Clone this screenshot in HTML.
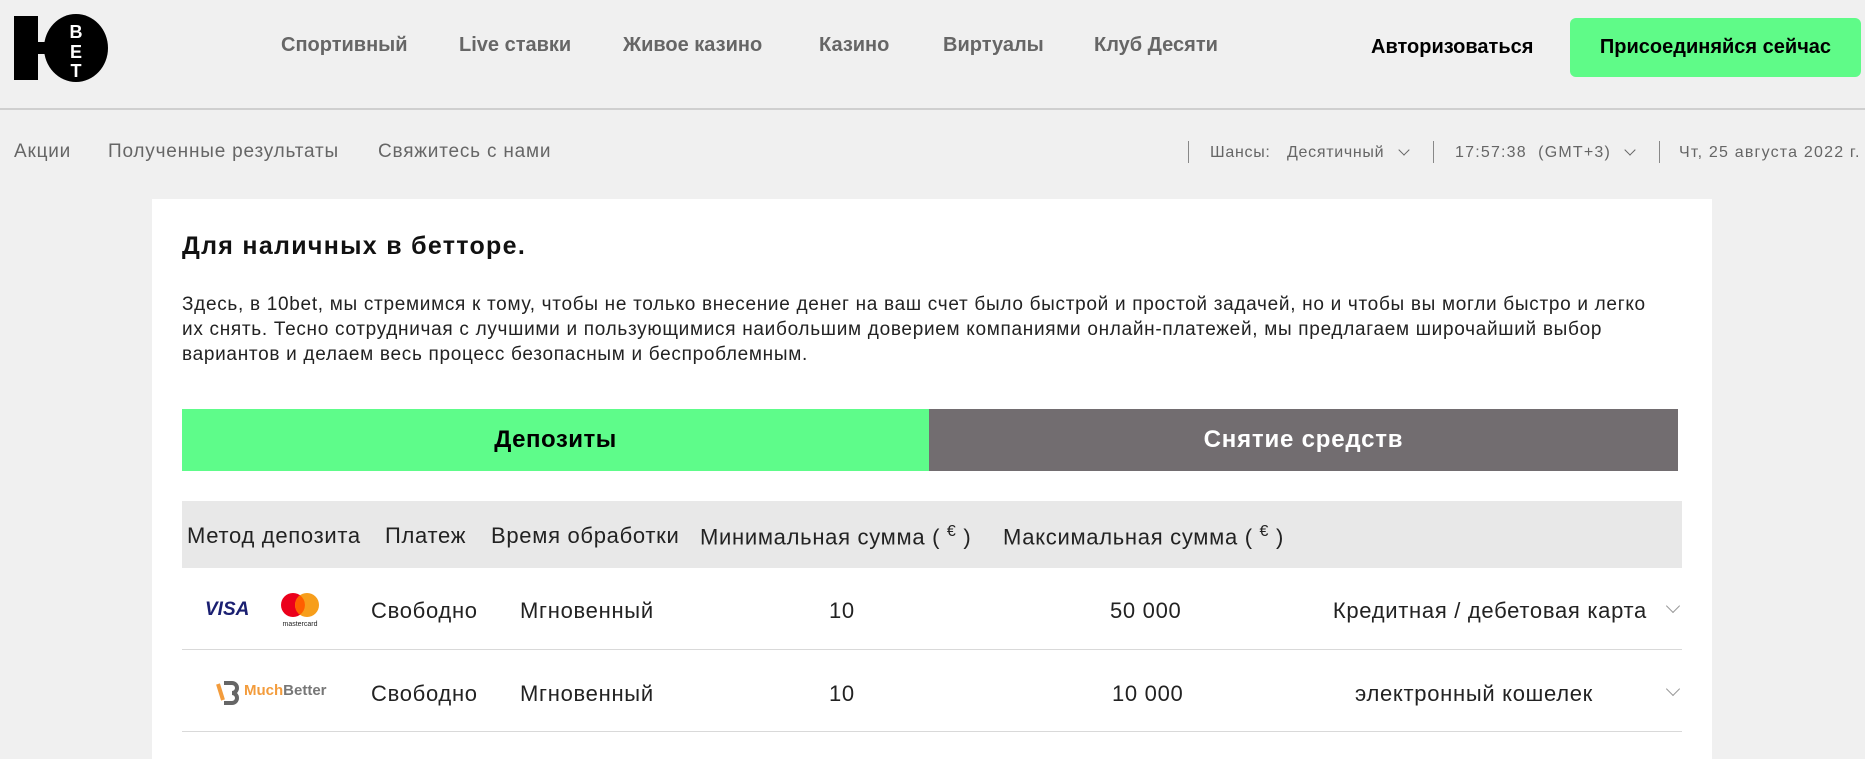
<!DOCTYPE html>
<html><head><meta charset="utf-8"><style>
*{margin:0;padding:0;box-sizing:border-box}
body{width:1865px;height:747px;overflow:hidden;background:#f0f0f0;font-family:"Liberation Sans",sans-serif;position:relative;color:#222}
.a{position:absolute;white-space:nowrap}
.nav{font-weight:bold;font-size:20px;color:#666;top:34px}
.sub{font-size:19px;color:#666;top:141px;letter-spacing:0.8px}
.tr{font-size:16px;color:#666;top:144px;letter-spacing:0.7px}
.sep{position:absolute;top:141px;width:1px;height:22px;background:#888}
.chev{position:absolute;width:8px;height:8px;border-right:1.6px solid #666;border-bottom:1.6px solid #666;transform:rotate(45deg)}
.th{font-size:22px;color:#222;top:523px;letter-spacing:0.7px}
.td{font-size:22px;color:#222;letter-spacing:0.7px}
.rchev{position:absolute;width:10px;height:10px;border-right:1px solid #999;border-bottom:1px solid #999;transform:rotate(45deg)}
</style></head><body>
<div class="a" style="left:0;top:108px;width:1865px;height:2px;background:#cfcfcf"></div>
<svg class="a" style="left:14px;top:14px" width="94" height="68" viewBox="0 0 94 68">
<rect x="0" y="2" width="24" height="64" fill="#000"/>
<rect x="20" y="28" width="12" height="12" fill="#000"/>
<ellipse cx="62" cy="34" rx="32" ry="34" fill="#000"/>
<text x="62" y="24" fill="#fff" font-family="Liberation Sans" font-weight="bold" font-size="18" text-anchor="middle">B</text>
<text x="62" y="44" fill="#fff" font-family="Liberation Sans" font-weight="bold" font-size="18" text-anchor="middle">E</text>
<text x="62" y="63" fill="#fff" font-family="Liberation Sans" font-weight="bold" font-size="18" text-anchor="middle">T</text>
</svg>
<div class="a nav" style="left:281px">Спортивный</div>
<div class="a nav" style="left:459px">Live ставки</div>
<div class="a nav" style="left:623px">Живое казино</div>
<div class="a nav" style="left:819px">Казино</div>
<div class="a nav" style="left:943px">Виртуалы</div>
<div class="a nav" style="left:1094px">Клуб Десяти</div>
<div class="a" style="left:1371px;top:36px;font-weight:bold;font-size:20px;color:#000">Авторизоваться</div>
<div class="a" style="left:1570px;top:18px;width:291px;height:59px;border-radius:6px;background:#5ffb88;color:#000;font-weight:bold;font-size:20px;text-align:center;line-height:59px">Присоединяйся сейчас</div>

<div class="a sub" style="left:14px">Акции</div>
<div class="a sub" style="left:108px">Полученные результаты</div>
<div class="a sub" style="left:378px">Свяжитесь с нами</div>
<div class="sep" style="left:1188px"></div>
<div class="a tr" style="left:1210px">Шансы:</div>
<div class="a tr" style="left:1287px">Десятичный</div>
<div class="chev" style="left:1400px;top:146px"></div>
<div class="sep" style="left:1433px"></div>
<div class="a tr" style="left:1455px;letter-spacing:1.2px">17:57:38 &nbsp;(GMT+3)</div>
<div class="chev" style="left:1626px;top:146px"></div>
<div class="sep" style="left:1659px"></div>
<div class="a tr" style="left:1679px;letter-spacing:1.2px">Чт, 25 августа 2022 г.</div>

<div class="a" style="left:152px;top:199px;width:1560px;height:560px;background:#fff"></div>
<div class="a" style="left:182px;top:232px;font-weight:bold;font-size:25px;letter-spacing:1.3px;color:#111">Для наличных в бетторе.</div>
<div class="a" style="left:182px;top:292px;font-size:19px;letter-spacing:0.7px;line-height:25px;color:#222">Здесь, в 10bet, мы стремимся к тому, чтобы не только внесение денег на ваш счет было быстрой и простой задачей, но и чтобы вы могли быстро и легко<br>их снять. Тесно сотрудничая с лучшими и пользующимися наибольшим доверием компаниями онлайн-платежей, мы предлагаем широчайший выбор<br>вариантов и делаем весь процесс безопасным и беспроблемным.</div>
<div class="a" style="left:182px;top:409px;width:747px;height:62px;background:#5efc8a;text-align:center;line-height:62px;font-weight:bold;font-size:24px;letter-spacing:0.5px;color:#000">Депозиты</div>
<div class="a" style="left:929px;top:409px;width:749px;height:62px;background:#726d70;text-align:center;line-height:62px;font-weight:bold;font-size:24px;letter-spacing:0.8px;color:#fff">Снятие средств</div>

<div class="a" style="left:182px;top:501px;width:1500px;height:67px;background:#e8e8e8"></div>
<div class="a th" style="left:187px">Метод депозита</div>
<div class="a th" style="left:385px">Платеж</div>
<div class="a th" style="left:491px">Время обработки</div>
<div class="a th" style="left:700px">Минимальная сумма ( <sup style="font-size:16px">€</sup> )</div>
<div class="a th" style="left:1003px">Максимальная сумма ( <sup style="font-size:16px">€</sup> )</div>

<div class="a" style="left:182px;top:649px;width:1500px;height:1px;background:#d9d9d9"></div>
<div class="a" style="left:182px;top:731px;width:1500px;height:1px;background:#d9d9d9"></div>

<div class="a" style="left:205px;top:599px;font-style:italic;font-weight:bold;font-size:19px;color:#1a1f71">VISA</div>
<svg class="a" style="left:277px;top:591px" width="46" height="38" viewBox="0 0 46 38">
<circle cx="16" cy="14" r="12" fill="#eb001b"/><circle cx="30" cy="14" r="12" fill="#f79e1b"/>
<path d="M23 4.3a12 12 0 0 1 0 19.4a12 12 0 0 1 0-19.4z" fill="#ff5f00"/>
<text x="23" y="35" font-size="7" text-anchor="middle" font-family="Liberation Sans" fill="#222">mastercard</text></svg>
<div class="a td" style="left:371px;top:598px">Свободно</div>
<div class="a td" style="left:520px;top:598px">Мгновенный</div>
<div class="a td" style="left:829px;top:598px">10</div>
<div class="a td" style="left:1110px;top:598px">50 000</div>
<div class="a td" style="right:218px;top:598px">Кредитная / дебетовая карта</div>
<div class="rchev" style="left:1668px;top:601px"></div>

<svg class="a" style="left:216px;top:680px" width="24" height="26" viewBox="0 0 24 26">
<path d="M2 4l5 16" stroke="#f39c3c" stroke-width="4" fill="none"/>
<path d="M8 3h8a5 5 0 0 1 0 10a5 5 0 0 1 0 10h-8" stroke="#666" stroke-width="4" fill="none"/></svg>
<div class="a" style="left:244px;top:682px;font-weight:bold;font-size:15px"><span style="color:#f39c3c">Much</span><span style="color:#777">Better</span></div>
<div class="a td" style="left:371px;top:681px">Свободно</div>
<div class="a td" style="left:520px;top:681px">Мгновенный</div>
<div class="a td" style="left:829px;top:681px">10</div>
<div class="a td" style="left:1112px;top:681px">10 000</div>
<div class="a td" style="left:1355px;top:681px">электронный кошелек</div>
<div class="rchev" style="left:1668px;top:684px"></div>
</body></html>
